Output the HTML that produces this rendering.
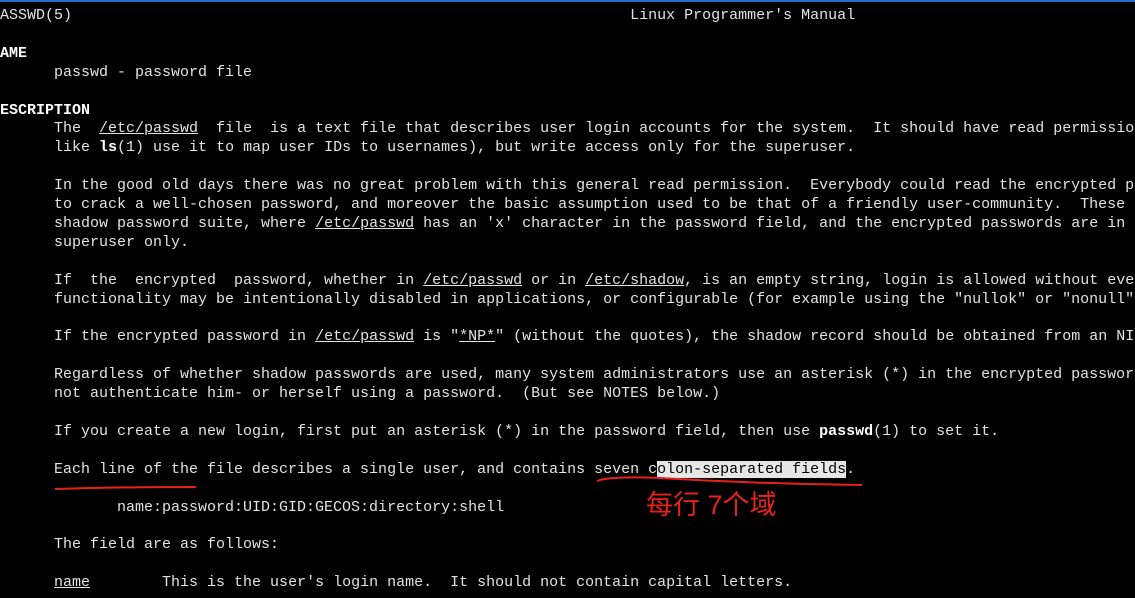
<!DOCTYPE html>
<html><head><meta charset="utf-8"><style>
html,body{margin:0;padding:0;background:#000;width:1135px;height:598px;overflow:hidden;position:relative}
#bar{position:absolute;left:0;top:0;width:1135px;height:2px;background:#1e6fd0}
pre{position:absolute;left:0;top:7px;margin:0;font-family:"Liberation Mono",monospace;font-size:15px;line-height:18.9px;color:#e2e2e2;white-space:pre}
b{color:#fff}
u{text-decoration:underline}
.h{background:#e6e6e6;color:#000}
#cn{position:absolute;left:646px;top:489px;font-family:"Liberation Sans","Noto Sans CJK SC",sans-serif;font-size:27px;color:#e8211d;line-height:32px}
svg{position:absolute;left:0;top:0}
</style></head><body>
<div id="bar"></div>
<pre>ASSWD(5)                                                              Linux Programmer's Manual

<b>AME</b>
      passwd - password file

<b>ESCRIPTION</b>
      The  <u>/etc/passwd</u>  file  is a text file that describes user login accounts for the system.  It should have read permission
      like <b>ls</b>(1) use it to map user IDs to usernames), but write access only for the superuser.

      In the good old days there was no great problem with this general read permission.  Everybody could read the encrypted pa
      to crack a well-chosen password, and moreover the basic assumption used to be that of a friendly user-community.  These
      shadow password suite, where <u>/etc/passwd</u> has an 'x' character in the password field, and the encrypted passwords are in
      superuser only.

      If  the  encrypted  password, whether in <u>/etc/passwd</u> or in <u>/etc/shadow</u>, is an empty string, login is allowed without eve
      functionality may be intentionally disabled in applications, or configurable (for example using the "nullok" or "nonull"

      If the encrypted password in <u>/etc/passwd</u> is "<u>*NP*</u>" (without the quotes), the shadow record should be obtained from an NI

      Regardless of whether shadow passwords are used, many system administrators use an asterisk (*) in the encrypted passwor
      not authenticate him- or herself using a password.  (But see NOTES below.)

      If you create a new login, first put an asterisk (*) in the password field, then use <b>passwd</b>(1) to set it.

      Each line of the file describes a single user, and contains seven c<span class="h">olon-separated fields</span>.

             name:password:UID:GID:GECOS:directory:shell

      The field are as follows:

      <u>name</u>        This is the user's login name.  It should not contain capital letters.</pre>
<svg width="1135" height="598"><path d="M55 489 Q120 487 196 487" stroke="#e8211d" stroke-width="2" fill="none"/><path d="M597 481 Q610 476 660 478 Q760 484 862 485" stroke="#e8211d" stroke-width="2" fill="none"/></svg>
<div id="cn">每行 7个域</div>
</body></html>
